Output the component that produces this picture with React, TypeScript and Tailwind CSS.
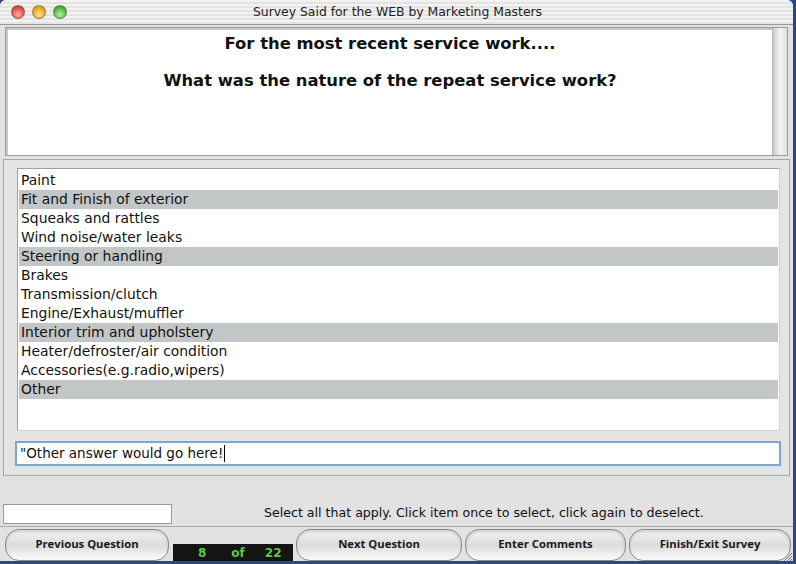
import React from "react";

const items = [
  "Paint",
  "Fit and Finish of exterior",
  "Squeaks and rattles",
  "Wind noise/water leaks",
  "Steering or handling",
  "Brakes",
  "Transmission/clutch",
  "Engine/Exhaust/muffler",
  "Interior trim and upholstery",
  "Heater/defroster/air condition",
  "Accessories(e.g.radio,wipers)",
  "Other",
];
const selected = new Set([1, 4, 8, 11]);

function Light({ from, to }: { from: string; to: string }) {
  return (
    <div
      className="w-[14px] h-[14px] rounded-full border border-[#6b6b6b]/60"
      style={{ background: `radial-gradient(circle at 50% 70%, ${from} 0%, ${to} 75%)` }}
    />
  );
}

function AquaButton({ label, className }: { label: string; className: string }) {
  return (
    <div
      className={`h-[32px] rounded-[14px] border border-[#8a8a8a] bg-gradient-to-b from-[#f4f4f4] via-[#dcdcdc] to-[#fbfbfb] shadow-[inset_0_2px_3px_rgba(0,0,0,0.15)] flex items-center justify-center pb-[2px] text-[11.3px] font-bold text-[#1a1a1a] font-['Open_Sans',sans-serif] ${className}`}
    >
      {label}
    </div>
  );
}

export default function App() {
  return (
    <div
      className="w-[796px] h-[564px] bg-[#2a4a7e] overflow-hidden"
      style={{ fontFamily: '"DejaVu Sans", "Open Sans", sans-serif' }}
    >
      <div className="w-[793px] h-[561px] bg-[#e2e2e2] rounded-t-[6px] flex flex-col">
        {/* title bar */}
        <div className="h-[25px] rounded-t-[6px] border-b border-[#9a9a9a] bg-[repeating-linear-gradient(to_bottom,#f2f2f2_0px,#f2f2f2_2px,#e4e4e4_2px,#e4e4e4_4px)] flex items-center relative">
          <div className="flex items-center gap-[7px] pl-[11px]">
            <Light from="#ffb0a8" to="#d83a2c" />
            <Light from="#ffe28a" to="#e09a12" />
            <Light from="#b6f49a" to="#3ea82a" />
          </div>
          <div className="absolute inset-0 flex items-center justify-center text-[12.4px] text-[#222] pl-[2px]">
            Survey Said for the WEB by Marketing Masters
          </div>
        </div>

        {/* question panel */}
        <div className="mt-[2px] mx-[5px] h-[129px] border border-[#9c9c9c] flex bg-white">
          <div className="flex-1 border-l-2 border-t-2 border-[#c8c8c8] flex flex-col items-center text-[16.4px] font-bold text-[#111] leading-[22px] pt-[3px]">
            <div>For the most recent service work....</div>
            <div className="mt-[15px]">What was the nature of the repeat service work?</div>
          </div>
          <div className="w-[15px] bg-gradient-to-r from-[#c9c9c9] via-[#f4f4f4] to-[#dedede] border-l border-[#b5b5b5]" />
        </div>

        {/* list panel */}
        <div className="mt-[3px] mx-[3px] h-[317px] border border-[#a8a8a8] bg-[#e4e4e4] flex flex-col pl-[13px] pr-[9px] pt-[8px]">
          <div className="h-[263px] bg-white border border-[#a0a0a0] border-r-[#d0d0d0] border-b-[#d0d0d0] pt-[2px] px-[1px] flex flex-col">
            {items.map((it, i) => (
              <div
                key={it}
                className={`h-[19px] leading-[19px] pl-[2px] text-[13.9px] text-[#111] ${selected.has(i) ? "bg-[#c3c6c6]" : ""}`}
              >
                {it}
              </div>
            ))}
          </div>
          <div className="mt-[10px] -ml-[2px] -mr-[1px] h-[25px] border-[2px] border-[#79a8d6] bg-white flex items-center pl-[3px] text-[13.5px] text-[#111]">
            "Other answer would go here!
            <span className="inline-block w-[1px] h-[17px] bg-black ml-[1px]" />
          </div>
        </div>

        {/* status row */}
        <div className="mt-[27px] h-[21px] flex items-center">
          <div className="ml-[3px] w-[169px] h-[20px] bg-white border border-[#9a9a9a]" />
          <div className="ml-[92px] text-[12.6px] text-[#111]">
            Select all that apply. Click item once to select, click again to deselect.
          </div>
        </div>
        <div className="mt-[2px] h-[1px] bg-[#a8a8a8]" />

        {/* buttons */}
        <div className="mt-[2px] h-[32px] flex items-end pl-[5px] relative">
          <AquaButton label="Previous Question" className="w-[164px]" />
          <div className="ml-[4px] w-[120px] h-[17px] bg-[#141414] flex items-center text-[12px] font-bold text-[#5fc64a] leading-none">
            <span className="ml-[25px]">8</span>
            <span className="ml-[25px]">of</span>
            <span className="ml-[20px]">22</span>
          </div>
          <AquaButton label="Next Question" className="ml-[3px] w-[166px]" />
          <AquaButton label="Enter Comments" className="ml-[3px] w-[161px]" />
          <AquaButton label="Finish/Exit Survey" className="ml-[3px] w-[162px]" />
          <svg className="absolute right-[0px] bottom-[-1px]" width="12" height="12" viewBox="0 0 12 12">
            <path d="M11 3 L3 11 M11 6 L6 11 M11 9 L9 11" stroke="#7a7a7a" strokeWidth="1" />
          </svg>
        </div>
      </div>
    </div>
  );
}
